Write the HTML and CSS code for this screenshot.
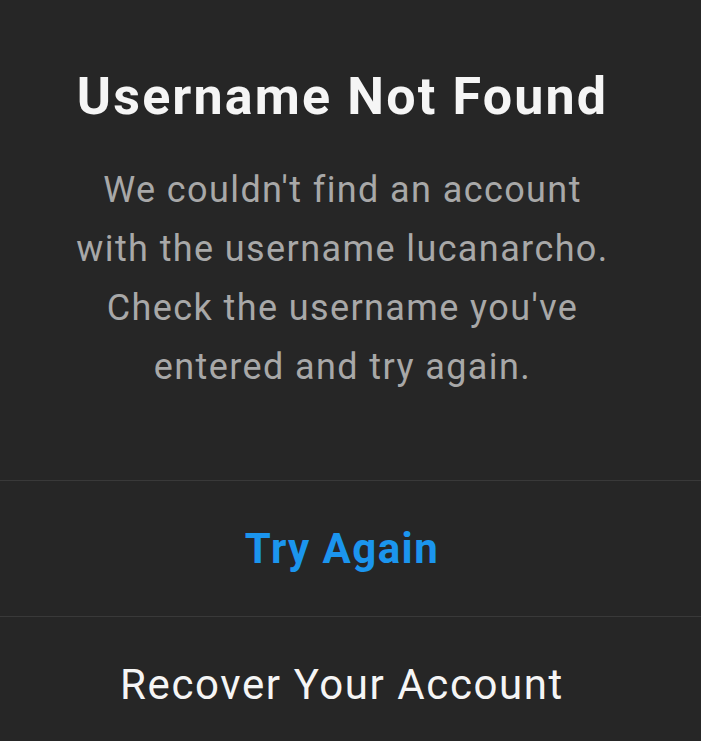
FILE: index.html
```html
<!DOCTYPE html>
<html lang="en">

<head>
    <meta charset="UTF-8">
    <meta name="viewport" content="width=device-width, initial-scale=1.0">
    <title>Username Not Found</title>
    <link rel="stylesheet" href="styles.css">
</head>

<body>
    <div class="dialog">
        <div class="dialog-body">
            <h2 class="dialog-title">Username Not Found</h2>
            <p class="dialog-text">We couldn't find an account with the username lucanarcho. Check the username you've entered and try again.</p>
        </div>
        <button class="dialog-btn primary">Try Again</button>
        <button class="dialog-btn">Recover Your Account</button>
    </div>
</body>

</html>
```

FILE: styles.css
```css
body {
    margin: 0;
    background-color: #262626;
    font-family: Roboto, 'Liberation Sans', sans-serif;
}

.dialog {
    display: flex;
    flex-direction: column;
    width: 100%;
    background-color: #262626;
}

.dialog-body {
    padding: 67px 46px 83px 30px;
    text-align: center;
}

.dialog-title {
    margin: 0;
    font-size: 52px;
    line-height: 60px;
    font-weight: 700;
    letter-spacing: 2.15px;
    color: #f5f5f5;
}

.dialog-text {
    margin: 34px auto 0;
    max-width: 545px;
    font-size: 36px;
    line-height: 59px;
    letter-spacing: 1.4px;
    color: #a8a8a8;
}

.dialog-btn {
    height: 136px;
    padding: 0 17px 0 0;
    border: none;
    border-top: 1px solid #393939;
    background: transparent;
    font-family: inherit;
    font-size: 42px;
    letter-spacing: 1.6px;
    color: #f5f5f5;
    cursor: pointer;
}

.dialog-btn.primary {
    color: #1b95ee;
    font-weight: 700;
    letter-spacing: 1.45px;
}
```
